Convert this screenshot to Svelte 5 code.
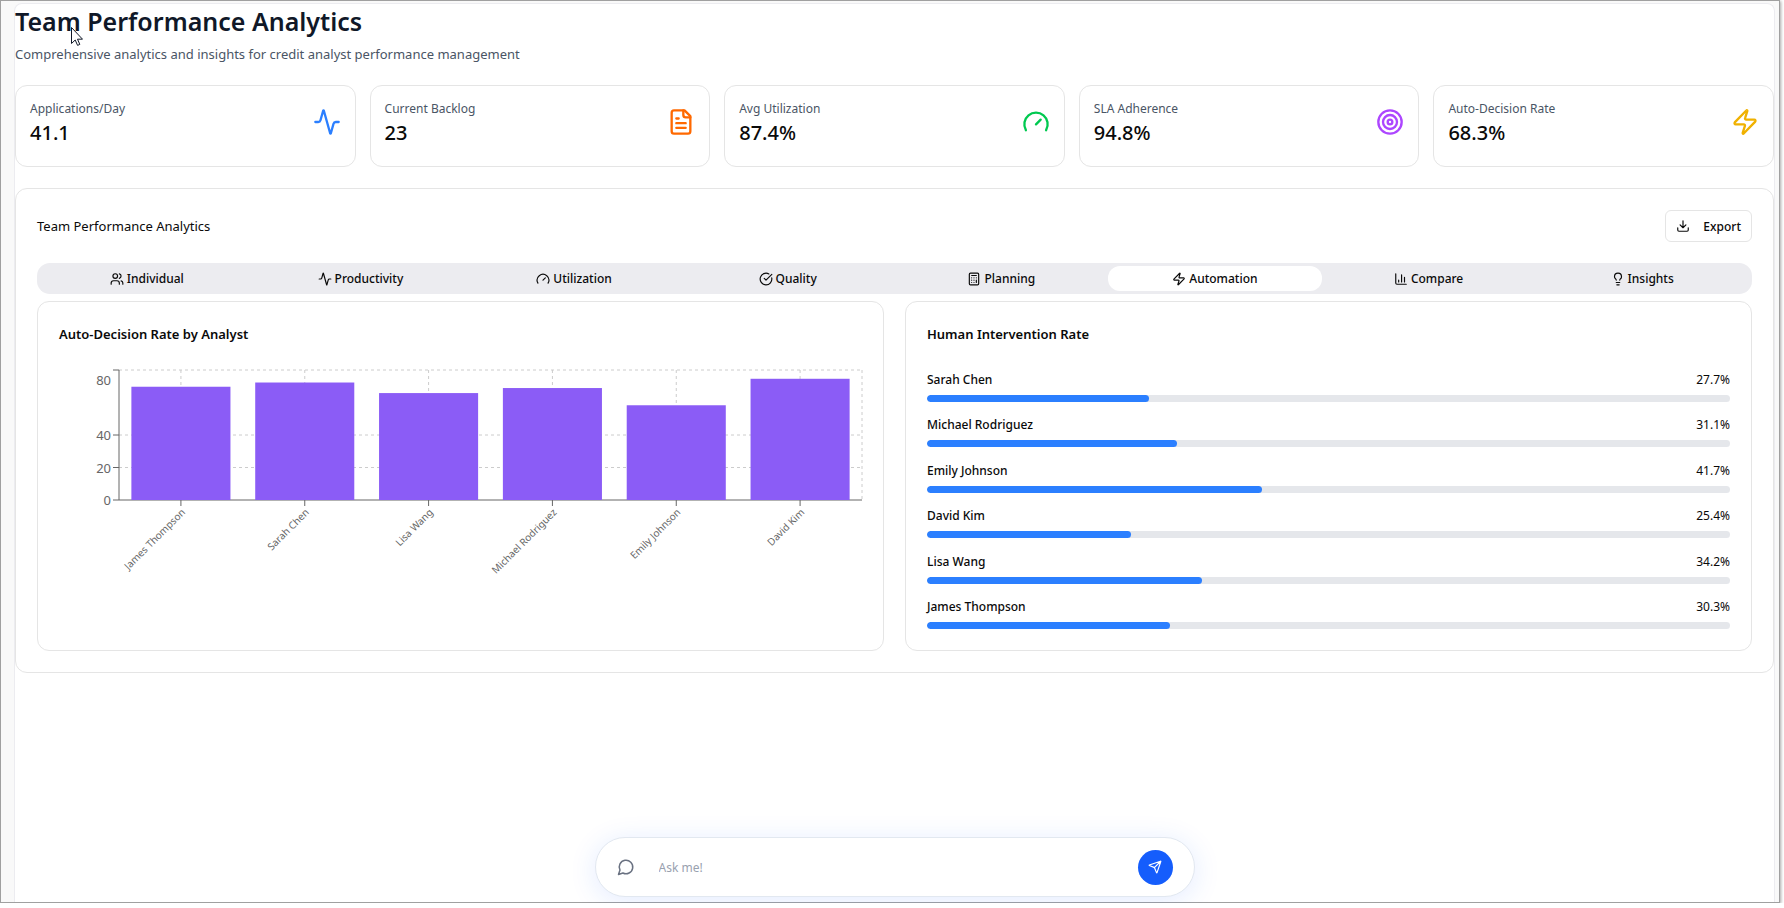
<script>
  const stats = [
    { label: 'Applications/Day', value: '41.1', icon: 'activity', color: '#2b7fff' },
    { label: 'Current Backlog', value: '23', icon: 'file', color: '#ff6900' },
    { label: 'Avg Utilization', value: '87.4%', icon: 'gauge', color: '#00c950' },
    { label: 'SLA Adherence', value: '94.8%', icon: 'target', color: '#ad46ff' },
    { label: 'Auto-Decision Rate', value: '68.3%', icon: 'zap', color: '#f0b100' }
  ];

  const tabs = [
    { name: 'Individual', icon: 'users' },
    { name: 'Productivity', icon: 'activity' },
    { name: 'Utilization', icon: 'gauge' },
    { name: 'Quality', icon: 'check' },
    { name: 'Planning', icon: 'calculator' },
    { name: 'Automation', icon: 'zap' },
    { name: 'Compare', icon: 'chart' },
    { name: 'Insights', icon: 'bulb' }
  ];

  const autoRates = [
    { name: 'James Thompson', rate: 69.7 },
    { name: 'Sarah Chen', rate: 72.3 },
    { name: 'Lisa Wang', rate: 65.8 },
    { name: 'Michael Rodriguez', rate: 68.9 },
    { name: 'Emily Johnson', rate: 58.3 },
    { name: 'David Kim', rate: 74.6 }
  ];

  const interventions = [
    { name: 'Sarah Chen', rate: 27.7 },
    { name: 'Michael Rodriguez', rate: 31.1 },
    { name: 'Emily Johnson', rate: 41.7 },
    { name: 'David Kim', rate: 25.4 },
    { name: 'Lisa Wang', rate: 34.2 },
    { name: 'James Thompson', rate: 30.3 }
  ];

  let activeTab = $state('Automation');
  let message = $state('');

  // chart geometry
  let chartWidth = $state(803);
  const left = 60;
  const plotHeight = 130;
  const maxRate = 80;

  let plotWidth = $derived(chartWidth - left);
  let step = $derived(plotWidth / autoRates.length);

  function y(v) {
    return plotHeight - (v / maxRate) * plotHeight;
  }

  function send(e) {
    e.preventDefault();
    message = '';
  }
</script>

{#snippet icon(name)}
  <svg class="icon" viewBox="0 0 24 24" aria-hidden="true">
    {#if name === 'activity'}
      <path d="M22 12h-2.48a2 2 0 0 0-1.93 1.46l-2.35 8.36a.25.25 0 0 1-.48 0L9.24 2.18a.25.25 0 0 0-.48 0l-2.35 8.36A2 2 0 0 1 4.49 12H2" />
    {:else if name === 'file'}
      <path d="M15 2H6a2 2 0 0 0-2 2v16a2 2 0 0 0 2 2h12a2 2 0 0 0 2-2V7Z" />
      <path d="M14 2v4a2 2 0 0 0 2 2h4M10 9H8M16 13H8M16 17H8" />
    {:else if name === 'gauge'}
      <path d="m12 14 4-4M3.34 19a10 10 0 1 1 17.32 0" />
    {:else if name === 'target'}
      <circle cx="12" cy="12" r="10" />
      <circle cx="12" cy="12" r="6" />
      <circle cx="12" cy="12" r="2" />
    {:else if name === 'zap'}
      <path d="M4 14a1 1 0 0 1-.78-1.63l9.9-10.2a.5.5 0 0 1 .86.46l-1.92 6.02A1 1 0 0 0 13 10h7a1 1 0 0 1 .78 1.63l-9.9 10.2a.5.5 0 0 1-.86-.46l1.92-6.02A1 1 0 0 0 11 14z" />
    {:else if name === 'users'}
      <path d="M16 21v-2a4 4 0 0 0-4-4H6a4 4 0 0 0-4 4v2" />
      <circle cx="9" cy="7" r="4" />
      <path d="M22 21v-2a4 4 0 0 0-3-3.87M16 3.13a4 4 0 0 1 0 7.75" />
    {:else if name === 'check'}
      <path d="M21.801 10A10 10 0 1 1 17 3.335M9 11l3 3L22 4" />
    {:else if name === 'calculator'}
      <rect width="16" height="20" x="4" y="2" rx="2" />
      <path d="M8 6h8M16 14v4M16 10h.01M12 10h.01M8 10h.01M12 14h.01M8 14h.01M12 18h.01M8 18h.01" />
    {:else if name === 'chart'}
      <path d="M3 3v16a2 2 0 0 0 2 2h16M18 17V9M13 17V5M8 17v-3" />
    {:else if name === 'bulb'}
      <path d="M15 14c.2-1 .7-1.7 1.5-2.5 1-.9 1.5-2.2 1.5-3.5A6 6 0 0 0 6 8c0 1 .2 2.2 1.5 3.5.7.7 1.3 1.5 1.5 2.5M9 18h6M10 22h4" />
    {:else if name === 'download'}
      <path d="M12 15V3M21 15v4a2 2 0 0 1-2 2H5a2 2 0 0 1-2-2v-4M7 10l5 5 5-5" />
    {:else if name === 'message'}
      <path d="M7.9 20A9 9 0 1 0 4 16.1L2 22Z" />
    {:else if name === 'send'}
      <path d="M14.536 21.686a.5.5 0 0 0 .937-.024l6.5-19a.496.496 0 0 0-.635-.635l-19 6.5a.5.5 0 0 0-.024.937l7.93 3.18a2 2 0 0 1 1.112 1.11zM21.854 2.147l-10.94 10.939" />
    {/if}
  </svg>
{/snippet}

<div class="window">
  <main class="page">
    <header class="page-header">
      <h1>Team Performance Analytics</h1>
      <p>Comprehensive analytics and insights for credit analyst performance management</p>
    </header>

    <section class="stats">
      {#each stats as stat}
        <div class="card stat">
          <div>
            <div class="stat-label">{stat.label}</div>
            <div class="stat-value">{stat.value}</div>
          </div>
          <span class="stat-icon" style="color: {stat.color}">{@render icon(stat.icon)}</span>
        </div>
      {/each}
    </section>

    <section class="card analytics">
      <div class="analytics-header">
        <h2>Team Performance Analytics</h2>
        <button class="export" type="button">{@render icon('download')}<span>Export</span></button>
      </div>

      <div class="tabs" role="tablist">
        {#each tabs as tab}
          <button
            class="tab"
            class:active={activeTab === tab.name}
            type="button"
            role="tab"
            aria-selected={activeTab === tab.name}
            onclick={() => (activeTab = tab.name)}
          >
            {@render icon(tab.icon)}<span>{tab.name}</span>
          </button>
        {/each}
      </div>

      <div class="panels">
        <div class="card panel">
          <h3>Auto-Decision Rate by Analyst</h3>
          <div class="chart" bind:clientWidth={chartWidth}>
            <svg width={chartWidth} height="259" role="img" aria-label="Auto-Decision Rate by Analyst">
              <g class="grid">
                {#each [20, 40, 80] as tick}
                  <line x1={left} x2={chartWidth} y1={y(tick)} y2={y(tick)} />
                {/each}
                {#each autoRates as _, i}
                  <line x1={left + step * (i + 0.5)} x2={left + step * (i + 0.5)} y1="0" y2={plotHeight} />
                {/each}
                <line x1={chartWidth} x2={chartWidth} y1="0" y2={plotHeight} />
              </g>
              <g class="axis">
                <line x1={left} x2={left} y1="0" y2={plotHeight} />
                <line x1={left} x2={chartWidth} y1={plotHeight} y2={plotHeight} />
                {#each [0, 20, 40, 80] as tick}
                  <line x1={left - 6} x2={left} y1={y(tick)} y2={y(tick)} />
                  <!-- top label is kept inside the plot area -->
                  <text class="y-label" x={left - 8} y={Math.max(y(tick), 10) + 5}>{tick}</text>
                {/each}
              </g>
              {#each autoRates as item, i}
                {@const cx = left + step * (i + 0.5)}
                <rect class="bar" x={cx - step * 0.4} y={y(item.rate)} width={step * 0.8} height={plotHeight - y(item.rate)} />
                <line class="tick" x1={cx} x2={cx} y1={plotHeight} y2={plotHeight + 6} />
                <text class="x-label" transform="translate({cx} {plotHeight + 8}) rotate(-45)" dy="7">{item.name}</text>
              {/each}
            </svg>
          </div>
        </div>

        <div class="card panel">
          <h3>Human Intervention Rate</h3>
          <ul class="rates">
            {#each interventions as item}
              <li>
                <div class="rate-row">
                  <span class="rate-name">{item.name}</span>
                  <span>{item.rate}%</span>
                </div>
                <div class="track"><div class="fill" style="width: {item.rate}%"></div></div>
              </li>
            {/each}
          </ul>
        </div>
      </div>
    </section>

    <form class="chat" onsubmit={send}>
      {@render icon('message')}
      <input type="text" placeholder="Ask me!" aria-label="Ask me!" bind:value={message} />
      <button type="submit" aria-label="Send">{@render icon('send')}</button>
    </form>
  </main>

  <svg class="cursor" viewBox="0 0 12 19" aria-hidden="true">
    <path d="M.5.5v16l3.7-3.5 2.4 5.4 2.2-1-2.3-5.2h5z" />
  </svg>
</div>

<style>
  :global(body) {
    background: #fff;
    font-family: 'Noto Sans', 'Open Sans', sans-serif;
    font-size: 12px;
    color: #0a0a0a;
  }

  .window {
    position: relative;
    box-sizing: border-box;
    min-height: calc(100vh - 5px);
    margin-right: 4px;
    padding: 2px 4px 0 13px;
    display: flex;
    border: 1px solid #a0a0a0;
    background: #f9f9f9;
    box-shadow: 1px 1px 3px rgba(0, 0, 0, 0.35);
  }

  .page {
    position: relative;
    flex: 1;
    min-width: 0;
    border: 1px solid #ececf0;
    border-bottom: none;
    border-radius: 8px 8px 0 0;
    background: #fff;
  }

  h1, h2, h3, p, ul {
    margin: 0;
    padding: 0;
  }

  button, input {
    font: inherit;
    color: inherit;
    border: none;
    background: none;
  }

  .icon {
    width: 14px;
    height: 14px;
    flex: none;
    fill: none;
    stroke: currentColor;
    stroke-width: 2;
    stroke-linecap: round;
    stroke-linejoin: round;
  }

  .page-header {
    margin-bottom: 21px;
  }

  h1 {
    font-size: 25px;
    line-height: 34px;
    font-weight: 600;
    color: #101828;
  }

  .page-header p {
    margin-top: 6px;
    font-size: 13px;
    line-height: 20px;
    color: #4a5565;
  }

  .card {
    border: 1px solid #e5e5e5;
    border-radius: 12px;
    background: #fff;
  }

  .stats {
    display: grid;
    grid-template-columns: repeat(5, 1fr);
    gap: 14px;
    margin-bottom: 21px;
  }

  .stat {
    display: flex;
    justify-content: space-between;
    padding: 14px 14px 18px;
  }

  .stat-label {
    line-height: 18px;
    color: #4a5565;
  }

  .stat-value {
    font-size: 20px;
    line-height: 30px;
    font-weight: 500;
  }

  .stat-icon {
    display: flex;
    align-items: center;
    height: 44px;
  }

  .stat-icon .icon {
    width: 28px;
    height: 28px;
  }

  .analytics {
    padding: 21px;
  }

  .analytics-header {
    display: flex;
    justify-content: space-between;
    align-items: center;
    margin-bottom: 21px;
  }

  h2 {
    font-size: 13px;
    line-height: 20px;
    font-weight: 400;
  }

  .export {
    display: flex;
    align-items: center;
    gap: 13px;
    height: 32px;
    padding: 0 10px;
    border: 1px solid #e5e5e5;
    border-radius: 6px;
    font-weight: 500;
  }

  .tabs {
    display: grid;
    grid-template-columns: repeat(8, 1fr);
    padding: 3px;
    margin-bottom: 7px;
    border-radius: 13px;
    background: #ececf0;
  }

  .tab {
    display: flex;
    justify-content: center;
    align-items: center;
    gap: 3px;
    height: 25px;
    padding: 0;
    border-radius: 12px;
    font-weight: 500;
  }

  .tab.active {
    background: #fff;
  }

  .panels {
    display: grid;
    grid-template-columns: 1fr 1fr;
    gap: 21px;
  }

  .panel {
    display: flex;
    flex-direction: column;
    min-width: 0;
    padding: 21px;
  }

  h3 {
    margin-bottom: 24px;
    font-size: 13px;
    line-height: 23px;
    font-weight: 600;
  }

  .chart svg {
    display: block;
    overflow: visible;
  }

  .grid line {
    stroke: #ccc;
    stroke-dasharray: 3 3;
  }

  .axis line, .tick {
    stroke: #666;
  }

  .bar {
    fill: #8b5cf6;
  }

  .y-label {
    font-size: 13px;
    text-anchor: end;
    fill: #666;
  }

  .x-label {
    font-size: 10px;
    text-anchor: end;
    fill: #666;
  }

  .rates {
    flex: 1;
    display: flex;
    flex-direction: column;
    justify-content: space-between;
    list-style: none;
  }

  .rate-row {
    display: flex;
    justify-content: space-between;
    margin-bottom: 5px;
    line-height: 20px;
  }

  .rate-name {
    font-weight: 500;
  }

  .track {
    height: 7px;
    border-radius: 4px;
    background: #e5e7eb;
    overflow: hidden;
  }

  .fill {
    height: 100%;
    border-radius: 4px;
    background: #2b7fff;
  }

  /* floating assistant bar over the page */
  .chat {
    position: absolute;
    left: 50%;
    bottom: 5px;
    transform: translateX(-50%);
    box-sizing: border-box;
    width: 600px;
    max-width: 90%;
    height: 60px;
    padding: 0 21px;
    display: flex;
    align-items: center;
    gap: 24px;
    border: 1px solid #e2e8f0;
    border-radius: 30px;
    background: #fff;
    box-shadow: 0 4px 28px rgba(21, 93, 252, 0.12);
    color: #6a7282;
  }

  .chat > .icon {
    width: 18px;
    height: 18px;
  }

  .chat input {
    flex: 1;
    min-width: 0;
    padding: 0;
    outline: none;
    color: #0a0a0a;
  }

  .chat input::placeholder {
    color: #99a1af;
    opacity: 1;
  }

  .chat button {
    display: flex;
    justify-content: center;
    align-items: center;
    width: 35px;
    height: 35px;
    padding: 0;
    border-radius: 50%;
    background: #155dfc;
    color: #fff;
  }

  .cursor {
    position: absolute;
    left: 70px;
    top: 26px;
    width: 12px;
    height: 19px;
    fill: #fff;
    stroke: #101828;
  }
</style>
